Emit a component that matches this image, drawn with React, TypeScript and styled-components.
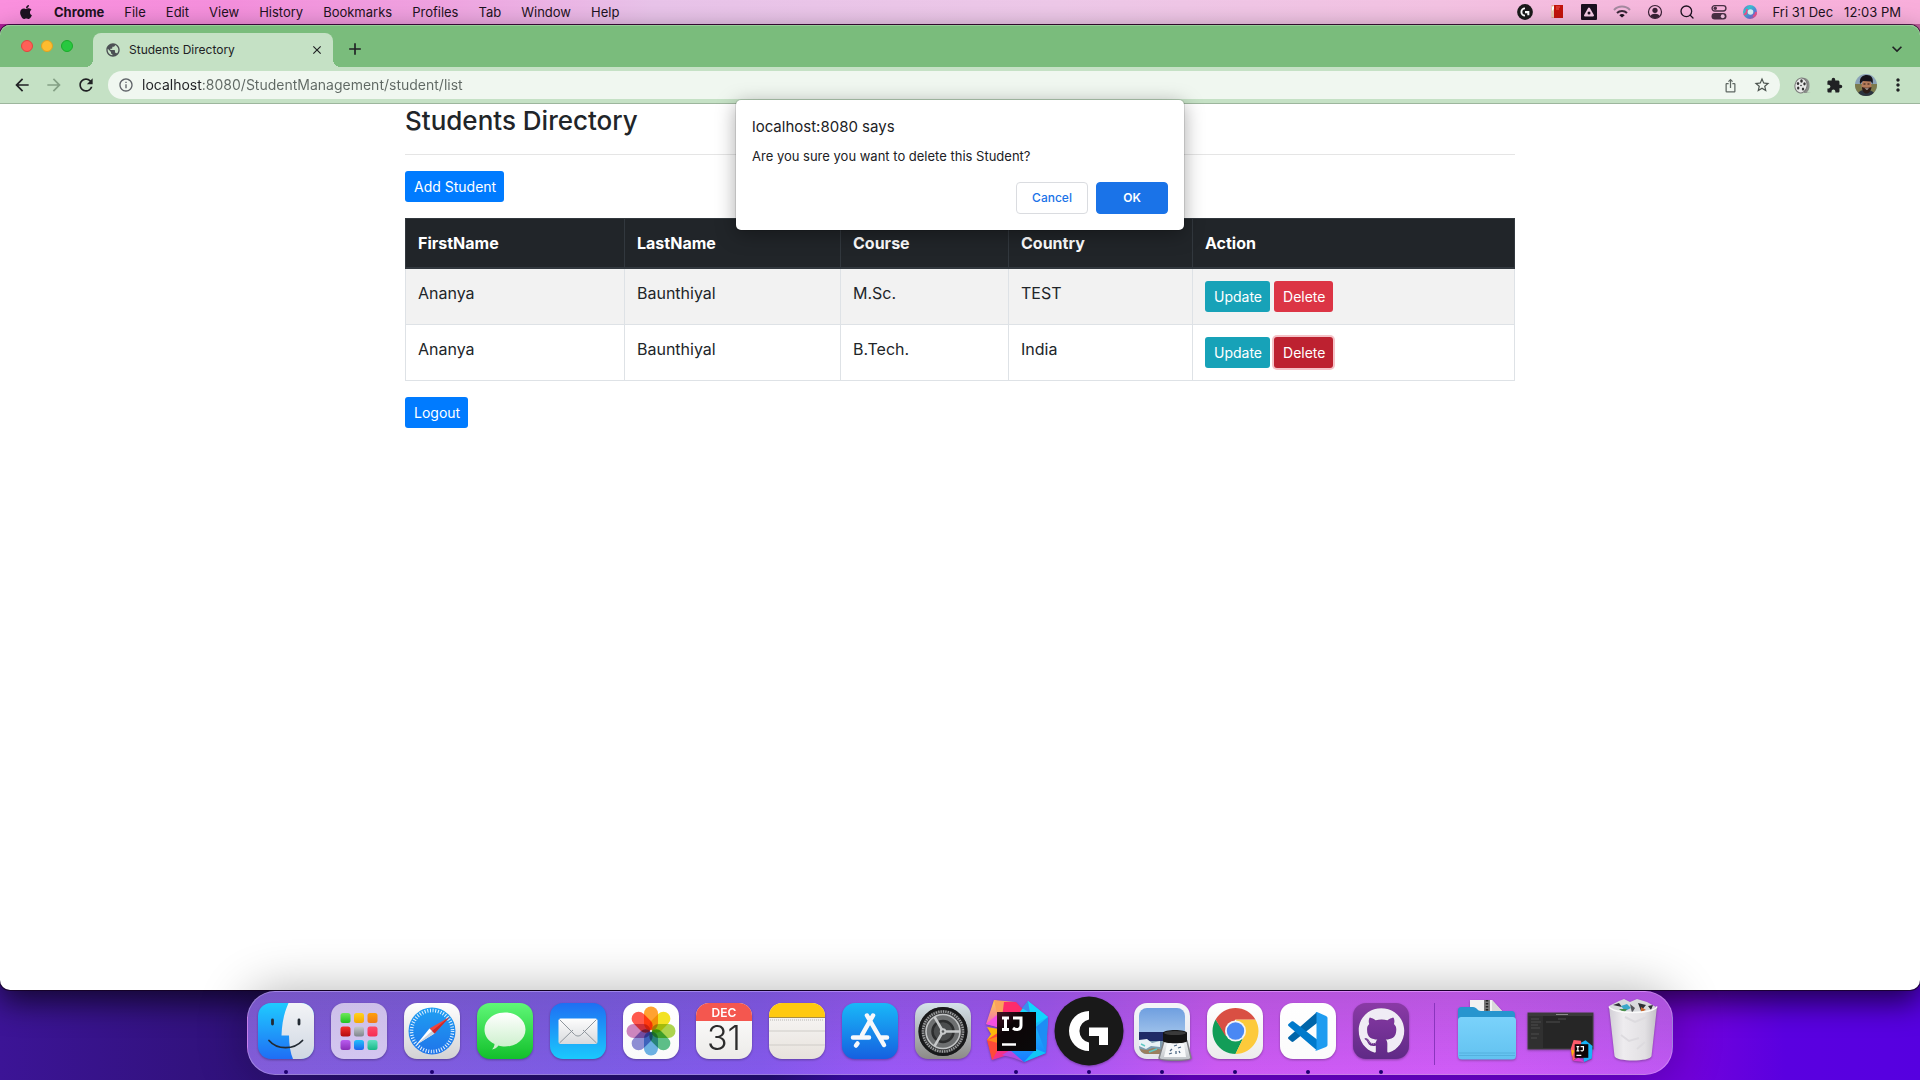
import React from "react";
import styled, { createGlobalStyle, css } from "styled-components";
import { FaApple, FaGithub } from "react-icons/fa";
import {
  MdAdd,
  MdArrowBack,
  MdArrowForward,
  MdClose,
  MdExtension,
  MdIosShare,
  MdKeyboardArrowDown,
  MdMoreVert,
  MdOutlineInfo,
  MdPublic,
  MdRefresh,
  MdStarOutline,
} from "react-icons/md";
import { Search } from "lucide-react";

const ui = `Inter, "Liberation Sans", Arial, sans-serif`;

const GlobalStyle = createGlobalStyle`
  *, *::before, *::after { box-sizing: border-box; }
  body {
    margin: 0;
    font-family: ${ui};
    color: #212529;
    -webkit-font-smoothing: antialiased;
  }
  button, input { font-family: inherit; }
  svg { display: block; flex: none; }
`;

/* ---------- desktop ---------- */

const Desktop = styled.div`
  display: flex;
  flex-direction: column;
  min-height: 100vh;
  overflow: hidden;
  background: linear-gradient(90deg, #b0209a 0%, #7a2a50 60%, #c0609c 100%) top / 100% 60px no-repeat,
    linear-gradient(
    90deg,
    #3c1496 0%,
    #32127f 10%,
    #27106f 22%,
    #25107a 40%,
    #3c0cb0 44%,
    #4208b8 59%,
    #6a02cc 62%,
    #7202dc 88%,
    #5a00e0 93%,
    #5600e0 100%
  );
`;

const MenuBar = styled.header`
  display: flex;
  align-items: center;
  justify-content: space-between;
  height: 24px;
  padding: 0 19px 1px 18px;
  font-size: 13px;
  color: #1d1220;
  background: linear-gradient(90deg, #fb90de 0%, #f48fdc 12%, #efa3e0 23%, #e8c3e9 34%, #edc8e8 55%, #f3c2e2 75%, #f7b6dc 88%, #f9aedb 100%);
`;

const MenuGroup = styled.nav`
  display: flex;
  align-items: center;
  gap: 20px;
`;

const MenuItem = styled.button<{ $strong?: boolean }>`
  padding: 0;
  border: 0;
  background: none;
  color: inherit;
  font-size: 13px;
  line-height: 16px;
  font-weight: ${(p) => (p.$strong ? 700 : 400)};
`;

const StatusGroup = styled.div`
  display: flex;
  align-items: center;
  gap: 16px;
`;

const Clock = styled.time`
  display: flex;
  gap: 11px;
  white-space: pre;
`;

const BrowserWindow = styled.main`
  position: relative;
  z-index: 0;
  flex: 1;
  display: flex;
  flex-direction: column;
  margin-top: 1px;
  border-radius: 10px;
  background: #fff;
  box-shadow: 0 0 0 1px rgba(20, 0, 30, 0.7), 0 12px 30px rgba(0, 0, 0, 0.65);
`;

/* ---------- tab strip and toolbar ---------- */

const TabStrip = styled.div`
  display: flex;
  align-items: flex-end;
  height: 42px;
  padding: 0 12px 0 21px;
  border-radius: 10px 10px 0 0;
  box-shadow: inset 0 1px 0 #97cd99;
  background: #7abc7c;
`;

const Lights = styled.div`
  display: flex;
  gap: 8px;
  height: 42px;
  padding-top: 15px;
  margin-right: 20px;
`;

const Light = styled.button<{ $fill: string; $edge: string }>`
  width: 12px;
  height: 12px;
  padding: 0;
  border: 1px solid ${(p) => p.$edge};
  border-radius: 50%;
  background: ${(p) => p.$fill};
`;

const Tab = styled.div`
  position: relative;
  display: flex;
  align-items: center;
  gap: 8px;
  width: 240px;
  height: 34px;
  padding: 0 8px 1px 12px;
  border-radius: 8px 8px 0 0;
  background: #c5e1c5;
  font-size: 12px;
  color: #202124;

  &::before,
  &::after {
    content: "";
    position: absolute;
    bottom: 0;
    width: 8px;
    height: 8px;
  }
  &::before {
    left: -8px;
    background: radial-gradient(circle at 0 0, transparent 8px, #c5e1c5 8px);
  }
  &::after {
    right: -8px;
    background: radial-gradient(circle at 100% 0, transparent 8px, #c5e1c5 8px);
  }
`;

const TabTitle = styled.span`
  flex: 1;
`;

const IconButton = styled.button<{ $size?: number; $dim?: boolean }>`
  display: flex;
  align-items: center;
  justify-content: center;
  width: ${(p) => p.$size ?? 32}px;
  height: ${(p) => p.$size ?? 32}px;
  padding: 0;
  border: 0;
  background: none;
  color: ${(p) => (p.$dim ? "#84a085" : "#202124")};
`;

const StripEnd = styled.div`
  display: flex;
  flex: 1;
  justify-content: space-between;
  padding: 0 0 1px 5px;
  margin-right: -6px;
`;

const Toolbar = styled.div`
  display: flex;
  align-items: center;
  height: 37px;
  padding: 0 6px;
  border-bottom: 1px solid #9db69d;
  background: #c5e1c5;
`;

const Omnibox = styled.div`
  display: flex;
  flex: 1;
  align-items: center;
  height: 28px;
  padding: 0 2px 0 10px;
  margin: 0 6px;
  border-radius: 14px;
  background: #f0f7f0;
  color: #5f6368;
`;

const Address = styled.input`
  flex: 1;
  height: 28px;
  margin-left: 8px;
  padding: 0 0 2px;
  border: 0;
  outline: 0;
  font-size: 14px;
  color: transparent;
  background: linear-gradient(90deg, #202124 60px, #5f6863 60px);
  background-clip: text;
  -webkit-background-clip: text;
`;

/* ---------- page ---------- */

const Container = styled.section`
  width: 100%;
  max-width: 1110px;
  margin: 0 auto;
`;

const Heading = styled.h2`
  margin: 0;
  padding-bottom: 16px;
  border-bottom: 1px solid #e5e5e5;
  font-size: 26px;
  line-height: 34px;
  font-weight: 500;
`;

type Tone = "primary" | "info" | "danger";
const tones: Record<Tone, string> = {
  primary: "#007bff",
  info: "#17a2b8",
  danger: "#dc3545",
};

const button = css<{ $tone: Tone; $active?: boolean }>`
  display: inline-block;
  padding: 5px 8px 5px 9px;
  border: 0;
  border-radius: 3px;
  font-size: 14px;
  line-height: 21px;
  color: #fff;
  text-decoration: none;
  background: ${(p) => tones[p.$tone]};
  ${(p) =>
    p.$active &&
    css`
      background: #bd2130;
      box-shadow: 0 0 0 2px rgba(225, 83, 97, 0.35);
    `}
`;

const LinkButton = styled.a<{ $tone: Tone; $active?: boolean }>`
  ${button}
`;

const PageButton = styled.button<{ $tone: Tone }>`
  ${button}
`;

const PageAction = styled.div`
  display: flex;
  padding: 16px 0;
`;

const RowActions = styled.div`
  display: flex;
  gap: 4px;
`;

const Table = styled.table`
  width: 100%;
  table-layout: fixed;
  border-collapse: collapse;
  font-size: 16px;
  line-height: 24px;

  th,
  td {
    padding: 12px;
    border: 1px solid #dee2e6;
    text-align: left;
    vertical-align: top;
  }
  thead th {
    border-color: #32383e;
    border-bottom: 2px solid #32383e;
    background: #212529;
    color: #fff;
    font-weight: 700;
  }
  tbody tr:nth-of-type(odd) {
    background: #f2f2f2;
  }
`;

const Col = styled.col<{ $width?: number }>`
  width: ${(p) => (p.$width ? `${p.$width}px` : "auto")};
`;

/* ---------- confirm dialog ---------- */

const Dialog = styled.div`
  position: absolute;
  top: 75px;
  left: 0;
  right: 0;
  width: 448px;
  margin: 0 auto;
  padding: 16px;
  border-radius: 5px;
  background: #fff;
  color: #202124;
  box-shadow: 0 0 0 1px rgba(0, 0, 0, 0.1), 0 4px 20px rgba(0, 0, 0, 0.35);
`;

const DialogTitle = styled.h1`
  margin: 0 0 9px;
  font-size: 15px;
  line-height: 22px;
  font-weight: 400;
`;

const DialogText = styled.p`
  margin: 0 0 17px;
  font-size: 13px;
  line-height: 18px;
`;

const DialogActions = styled.div`
  display: flex;
  justify-content: flex-end;
  gap: 8px;
`;

const DialogButton = styled.button<{ $main?: boolean }>`
  width: 72px;
  height: 32px;
  padding: 0 0 2px;
  border: 1px solid ${(p) => (p.$main ? "#1a73e8" : "#dadce0")};
  border-radius: 4px;
  background: ${(p) => (p.$main ? "#1a73e8" : "#fff")};
  color: ${(p) => (p.$main ? "#fff" : "#1a73e8")};
  font-size: 12px;
  font-weight: ${(p) => (p.$main ? 600 : 500)};
`;

/* ---------- dock ---------- */

const DockArea = styled.footer`
  position: relative;
  z-index: 1;
  display: flex;
  justify-content: center;
  height: 90px;
  padding: 1px 0 5px;
`;

const DockBar = styled.div`
  display: flex;
  padding: 0 2px;
  border: 1px solid rgba(255, 255, 255, 0.25);
  border-radius: 28px;
  background: linear-gradient(rgba(60, 50, 90, 0.16), rgba(60, 50, 90, 0)),
    linear-gradient(90deg, #835ddb 0%, #7d5ce6 25%, #8459ec 36%, #9a58f6 45%, #a356f4 56%, #cc5af4 68%, #d05cf8 85%, #c058f4 100%);
  box-shadow: 0 0 50px rgba(0, 0, 0, 0.3);
`;

const DockItem = styled.button`
  display: flex;
  flex-direction: column;
  align-items: center;
  width: 73px;
  padding: 11px 1px 0 0;
  border: 0;
  background: none;

  svg {
    overflow: visible;
    filter: drop-shadow(0 1px 1px rgba(0, 0, 0, 0.3));
  }
`;

const RunningDot = styled.span`
  width: 4px;
  height: 4px;
  margin-top: 11px;
  border-radius: 50%;
  background: #1d0070;
`;

const DockDivider = styled.span`
  width: 1px;
  height: 62px;
  margin: 11px 16px 0;
  background: #8a35bd;
`;

/* ---------- menu bar glyphs ---------- */

const LogiG = ({ size = 16 }: { size?: number }) => (
  <svg width={size} height={size} viewBox="0 0 70 70">
    <circle cx="35" cy="35" r="34.500" fill="#1a1a1a" />
    <path d="M35 15a20 20 0 0 0 0 40v-8.500a11.500 11.500 0 0 1 0-23zM35 31h19v18h-9v-9h-10z" fill="#fff" />
  </svg>
);

const DictionaryGlyph = () => (
  <svg width="16" height="16" viewBox="0 0 16 16">
    <path d="M2 2l3-1h9v13H5l-3-1z" fill="#c3140c" />
    <path d="M2 2l3-1v13l-3-1z" fill="#e9c9b0" />
    <path d="M3 3l2-1v3L3 7z" fill="#fff" />
    <path d="M7 3h4M7 5h3" stroke="#e55" />
  </svg>
);

const TriangleGlyph = () => (
  <svg width="16" height="16" viewBox="0 0 16 16">
    <rect width="16" height="16" rx="1" fill="#1a1020" />
    <path d="M8 4.500L12 11.500H4z" fill="#f6cbe6" stroke="#f6cbe6" strokeWidth="2" strokeLinejoin="round" />
    <circle cx="8" cy="9" r="1.500" fill="#1a1020" />
  </svg>
);

const WifiGlyph = () => (
  <svg width="18" height="16" viewBox="0 0 18 16" fill="none" strokeWidth="2">
    <path d="M1 6a11 11 0 0 1 16 0" stroke="#a58aa0" />
    <path d="M4 9a7 7 0 0 1 10 0" stroke="#3d2a3b" />
    <path d="M9 13.500L6.300 11.200a4 4 0 0 1 5.400 0z" fill="#1d1220" />
  </svg>
);

const UserGlyph = () => (
  <svg width="16" height="16" viewBox="0 0 16 16">
    <circle cx="8" cy="8" r="6.500" fill="none" stroke="#3a2036" strokeWidth="1.200" />
    <circle cx="8" cy="6.300" r="2.600" fill="#3a2036" />
    <path d="M3.500 12c1-3 8-3 9 0-2 3-7 3-9 0z" fill="#3a2036" />
  </svg>
);

const ControlGlyph = () => (
  <svg width="16" height="16" viewBox="0 0 15 15">
    <rect x="1" y="1.500" width="13" height="5" rx="2.500" fill="none" stroke="#4a3046" strokeWidth="1.300" />
    <circle cx="4" cy="4" r="1.600" fill="#4a3046" />
    <rect x="0.500" y="8.500" width="14" height="6" rx="3" fill="#4a3046" />
    <circle cx="11" cy="11.500" r="1.800" fill="#f3c2e2" />
  </svg>
);

const SiriGlyph = () => (
  <svg width="14" height="14" viewBox="0 0 14 14">
    <defs>
      <linearGradient id="siri" x1="0" y1="0" x2="1" y2="1">
        <stop offset="0" stopColor="#8a5bc8" />
        <stop offset="0.300" stopColor="#35c5cf" />
        <stop offset="0.650" stopColor="#5a7fd8" />
        <stop offset="1" stopColor="#e8468a" />
      </linearGradient>
    </defs>
    <circle cx="7" cy="7" r="7" fill="url(#siri)" />
    <path d="M1 9c2 1 3-2 3-5M10 11c2 0 3-2 3-4" stroke="#e8508e" strokeWidth="2" fill="none" />
    <circle cx="7.500" cy="7" r="2.800" fill="#d8f3f6" />
  </svg>
);

/* ---------- toolbar glyphs ---------- */

const ReelGlyph = () => (
  <svg width="17" height="17" viewBox="0 0 17 17">
    <path d="M8 1c5-1 8 3 7.500 8 0 3-1 5-3 6.500L17 16h-7z" fill="#8b8f8b" />
    <ellipse cx="7" cy="8.500" rx="6" ry="7.500" fill="#e6e8e6" stroke="#777" transform="rotate(12 7 8.500)" />
    <g fill="#333">
      <ellipse cx="7.500" cy="4" rx="1.300" ry="1.700" />
      <ellipse cx="4" cy="6.500" rx="1.200" ry="1.600" />
      <ellipse cx="10.500" cy="6.800" rx="1.200" ry="1.600" />
      <ellipse cx="4.200" cy="11" rx="1.200" ry="1.600" />
      <ellipse cx="9" cy="12" rx="1.200" ry="1.600" />
      <circle cx="7" cy="8.500" r="0.800" />
    </g>
  </svg>
);

const Avatar = () => (
  <svg width="22" height="22" viewBox="0 0 22 22">
    <defs>
      <clipPath id="face"><circle cx="11" cy="11" r="11" /></clipPath>
    </defs>
    <g clipPath="url(#face)">
      <rect width="22" height="22" fill="#8ba3b8" />
      <rect y="10" width="22" height="12" fill="#7c7a4c" />
      <path d="M2 22c1-5 4-6 9-6s9 2 9 6z" fill="#2b3440" />
      <ellipse cx="11.500" cy="11.500" rx="5" ry="6.500" fill="#b57b5a" />
      <path d="M5 10C4 3 8 1 12 1s7 3 5.500 9L16 7.500 8 7z" fill="#15131a" />
      <path d="M7 13c1 1 8 1 9.500 0-.5 4-2.500 6.500-5 6.500S7 17 7 13z" fill="#2c1c18" />
      <path d="M9.500 14.500h4.500l-2 1.300z" fill="#f0e4dc" />
      <path d="M8.500 10h2M12.500 10h2" stroke="#241712" />
    </g>
  </svg>
);

/* ---------- dock drawings ---------- */

const Grad = ({ id, from, to, mid }: { id: string; from: string; to: string; mid?: string }) => (
  <linearGradient id={id} x1="0" y1="0" x2="0" y2="1">
    <stop offset="0" stopColor={from} />
    {mid && <stop offset="0.500" stopColor={mid} />}
    <stop offset="1" stopColor={to} />
  </linearGradient>
);

const Tile = ({ id, from, to, children }: { id: string; from: string; to: string; children?: React.ReactNode }) => (
  <svg width="56" height="56" viewBox="0 0 56 56">
    <defs>
      <Grad id={id} from={from} to={to} />
      <clipPath id={`${id}-clip`}><rect width="56" height="56" rx="13" /></clipPath>
    </defs>
    <rect width="56" height="56" rx="13" fill={`url(#${id})`} />
    {children}
  </svg>
);

const Finder = () => (
  <Tile id="finder" from="#1fcbff" to="#1f6ef5">
    <defs><Grad id="finder-r" from="#f3f4f7" to="#cfd7e2" /></defs>
    <path d="M30.500 0C26 10 24 20 23.500 32.500h7.500C31 42 32.500 50 35 56h21V0z" fill="url(#finder-r)" clipPath="url(#finder-clip)" />
    <path d="M14.500 17v4M41 17v4" stroke="#222a33" strokeWidth="2.800" strokeLinecap="round" />
    <path d="M11 37.500c8 9.500 25 9.500 33.500 0" fill="none" stroke="#222a33" strokeWidth="1.800" strokeLinecap="round" />
  </Tile>
);

const padColors = [
  ["#6ee85c", "#1fc41f"], ["#ffd21f", "#f5a800"], ["#ff9f0a", "#ef7a1a"],
  ["#f5322a", "#b30d0d"], ["#c5c9ce", "#7f858c"], ["#ff4a6a", "#f52d55"],
  ["#b95cf0", "#8a2fb8"], ["#22c2fb", "#1f63ee"], ["#5fe0c2", "#18b887"],
];

const Launchpad = () => (
  <Tile id="pad" from="#cdbfe9" to="#d3c6f0">
    {padColors.map(([a, b], i) => (
      <g key={a}>
        <defs><Grad id={`pad${i}`} from={a} to={b} /></defs>
        <rect x={9.500 + (i % 3) * 13.500} y={10 + Math.floor(i / 3) * 13.500} width="10" height="10" rx="2.500" fill={`url(#pad${i})`} />
      </g>
    ))}
  </Tile>
);

const Safari = () => (
  <Tile id="safari" from="#ffffff" to="#d2d2d4">
    <defs><Grad id="safari-b" from="#1f9ff2" to="#1f74ea" /></defs>
    <circle cx="28" cy="28" r="23.500" fill="url(#safari-b)" />
    <circle cx="28" cy="28" r="20.500" fill="none" stroke="#e4f2ff" strokeWidth="3.600" strokeDasharray="1 1.683" />
    <path d="M45.500 14L25.500 25.500l5 5z" fill="#f0443c" />
    <path d="M12 42l13.500-16.500 5 5z" fill="#fff" />
    <path d="M12 42l18.500-11.500-2.500-2.500z" fill="#ccd3dc" />
    <path d="M45.500 14L30.500 30.500 28 28z" fill="#c92a2a" />
  </Tile>
);

const Messages = () => (
  <Tile id="msg" from="#5ff777" to="#12c02b">
    <defs><Grad id="msg-b" from="#ffffff" to="#c9efc9" /></defs>
    <path d="M28 9.500c11.500 0 20.500 7.500 20.500 17S39.500 43.500 28 43.500c-2.500 0-4.500-.3-6.500-1-1.500 2-4 3.700-6.500 4 1.500-1.500 2.500-3.500 2.500-5.500C11 38 7.500 32.500 7.500 26.500c0-9.500 9-17 20.500-17z" fill="url(#msg-b)" />
  </Tile>
);

const Mail = () => (
  <Tile id="mail" from="#1e6ff3" to="#1bc9fd">
    <defs><Grad id="mail-e" from="#fdfdfd" to="#d8dadd" /></defs>
    <rect x="8.500" y="15.500" width="39" height="25.500" rx="2" fill="url(#mail-e)" />
    <path d="M9.500 40L23 27M46.500 40L33 27M9.500 16.500L24.500 31.500c2 2 5 2 7 0L46.500 16.500" fill="none" stroke="#8e959c" strokeWidth="1" />
  </Tile>
);

const petals = ["#ff9a1f", "#f2df10", "#a5cf3f", "#4fb87e", "#5fa9e0", "#8484cf", "#c97cb8", "#ff4b3e"];

const Photos = () => (
  <Tile id="photos" from="#ffffff" to="#fafafa">
    <g style={{ isolation: "isolate" }}>
      {petals.map((c, i) => (
        <rect key={c} x="21" y="3.500" width="14" height="24" rx="7" fill={c} fillOpacity="0.920" transform={`rotate(${i * 45} 28 28)`} style={{ mixBlendMode: "multiply" }} />
      ))}
    </g>
    <circle cx="28" cy="28" r="1" fill="#fff" />
  </Tile>
);

const Calendar = () => (
  <Tile id="cal" from="#ffffff" to="#ecebe8">
    <path d="M0 18h56V0H0z" fill="#f4574f" clipPath="url(#cal-clip)" />
    <text x="28" y="13.500" textAnchor="middle" fontSize="12" fontWeight="600" fill="#fff">DEC</text>
    <text x="28" y="47" textAnchor="middle" fontSize="34" fontWeight="300" fill="#2c2c2c">31</text>
  </Tile>
);

const Notes = () => (
  <Tile id="notes" from="#fbfafa" to="#e7e2dc">
    <path d="M0 14h56V0H0z" fill="#ffc90f" clipPath="url(#notes-clip)" />
    <path d="M0 14.500h56" stroke="#a88d45" />
    <path d="M1 17h54" stroke="#b8b6b3" strokeDasharray="1 1" />
    <path d="M0 28h56M0 42h56" stroke="#cfccc8" />
  </Tile>
);

const AppStore = () => (
  <Tile id="store" from="#19b8f8" to="#1560e0">
    <g fill="none" stroke="#f6f8fb" strokeWidth="4.500" strokeLinecap="round">
      <path d="M31 12.500L20 32M25 12.500L42 42M11 34.500h16M38 34.500h7M15.500 40.500l-1.500 2" />
    </g>
  </Tile>
);

const Settings = () => (
  <Tile id="prefs" from="#d5e2ea" to="#8c8a87">
    <circle cx="28" cy="28.500" r="24.500" fill="#3c3d3e" />
    <circle cx="28" cy="28.500" r="23" fill="none" stroke="#18191a" strokeWidth="3" />
    <circle cx="28" cy="28.500" r="20" fill="none" stroke="#a0a2a3" strokeWidth="2.500" strokeDasharray="1.200 1.200" />
    <circle cx="28" cy="28.500" r="17" fill="#6d6f70" stroke="#c2c4c5" strokeWidth="1.600" />
    <circle cx="28" cy="28.500" r="10.500" fill="#4b4d4e" stroke="#2c2d2e" strokeWidth="2.500" />
    <g stroke="#c8cacb" strokeWidth="2.600">
      <path d="M28 28.500h17M28 28.500L19.500 13.800M28 28.500L19.500 43.200" />
    </g>
    <circle cx="28" cy="28.500" r="3.200" fill="#c8cacb" />
    <circle cx="28" cy="28.500" r="1.300" fill="#55585a" />
  </Tile>
);

const IntelliJ = () => (
  <svg width="56" height="56" viewBox="0 0 56 56">
    <defs>
      <linearGradient id="ij-a" x1="0" y1="0" x2="0" y2="1">
        <stop offset="0" stopColor="#fdd04a" />
        <stop offset="1" stopColor="#f55ac8" />
      </linearGradient>
      <linearGradient id="ij-b" x1="0" y1="0" x2="0" y2="1">
        <stop offset="0" stopColor="#18e3f5" />
        <stop offset="1" stopColor="#1a7bff" />
      </linearGradient>
      <linearGradient id="ij-k" x1="0" y1="0" x2="1" y2="1">
        <stop offset="0" stopColor="#4a1228" />
        <stop offset="0.350" stopColor="#0c0406" />
        <stop offset="1" stopColor="#0a0a0a" />
      </linearGradient>
    </defs>
    <path d="M-2 21L6-3l14 4-8 24z" fill="url(#ij-a)" />
    <path d="M6-3l21 2-6 12-11 4z" fill="#fba35c" />
    <path d="M16-1l12 0 9 10-4 10-20 4z" fill="#ff2c6c" />
    <path d="M-2 21l12-10 4 14z" fill="#f74fe0" />
    <path d="M-1 24l12 2 2 8-14 3 4-6z" fill="#ffb60a" />
    <path d="M-1 37l12-8 6 16-13 12z" fill="#ff4a38" />
    <path d="M-1 37l12-4 2 8z" fill="#ff8a1a" />
    <path d="M4 57l8-14 14 7z" fill="#f2318c" />
    <path d="M14 52l10-6 12 13-10-4z" fill="#b44ae0" />
    <path d="M32 9L40-2l20 16-2 36-22 9-14-12z" fill="url(#ij-b)" />
    <path d="M40-2l20 16-12 6z" fill="#10d6ff" />
    <path d="M34 5l6-7 2 12z" fill="#3a8df0" />
    <path d="M48 24l12-10-2 36z" fill="#1d8df5" />
    <path d="M36 59l12-13 10 4z" fill="#12c5f5" />
    <rect x="9" y="9" width="39" height="39" fill="url(#ij-k)" />
    <path d="M14 15h7M14 26.500h7M17.500 15v11M25 15h8v7.500c0 4.500-5 5-8 2.500" fill="none" stroke="#fff" strokeWidth="3" />
    <path d="M14 41.500h14" stroke="#fff" strokeWidth="2.500" />
  </svg>
);

const LogitechHub = () => (
  <svg width="56" height="56" viewBox="0 0 56 56">
    <circle cx="28" cy="28" r="34.500" fill="#191919" />
    <path d="M28 8a20 20 0 0 0 0 40v-8.500a11.700 11.700 0 0 1 0-23zM28 24.500h19V42h-9v-9H28z" fill="#fff" />
  </svg>
);

const Preview = () => (
  <Tile id="prev" from="#f5f6f9" to="#e3e4ea">
    <defs>
      <Grad id="prev-s" from="#6f9fe0" to="#c3dcf2" />
      <Grad id="prev-j" from="#f2f4f6" to="#bfc4c8" />
      <clipPath id="prev-c"><rect x="5" y="5" width="46" height="46" rx="8" /></clipPath>
    </defs>
    <g clipPath="url(#prev-c)">
      <rect x="5" y="5" width="46" height="46" fill="url(#prev-s)" />
      <rect x="5" y="29" width="46" height="10" fill="#1f2a66" />
      <rect x="5" y="38" width="46" height="13" fill="#7d9cb0" />
      <path d="M5 37l8-1 5 4 8-2v6l-9-1-5 3-7-3z" fill="#e9f1f5" />
      <path d="M5 46l8 1 6-2 10 2v4H5z" fill="#9a7f5e" />
      <path d="M7 41l4 2M15 49l8-3" stroke="#5fc8c4" strokeWidth="1.500" />
    </g>
    <path d="M30 38h23l4 17c0 3-32 3-32 0z" fill="url(#prev-j)" stroke="#7e8184" strokeWidth="1.500" />
    <path d="M33 41h17l2 13H30z" fill="#f7f9fa" />
    <path d="M40 43l3-1M44 45l3-1M36 48l2-2M35 51l3-1M42 48v3M45 48l1 2" stroke="#4d6682" strokeWidth="1.300" />
    <path d="M29 30c0-4 24-4 24 0v8c0 3-24 3-24 0z" fill="#141414" />
    <ellipse cx="41" cy="30" rx="11" ry="2" fill="#3a3a3a" />
  </Tile>
);

const Chrome = () => (
  <Tile id="chrome" from="#ffffff" to="#ececec">
    <path d="M8.600 16.500A23 23 0 0 0 28.500 51L37.200 33 19.800 33z" fill="#129d58" />
    <path d="M28.500 51A23 23 0 0 0 48.400 16.500H28.500l8.700 16.500z" fill="#fdca3b" />
    <path d="M8.600 16.500A23 23 0 0 1 48.400 16.500H28.500L18.500 33z" fill="#d94f43" />
    <circle cx="28.500" cy="28" r="10.500" fill="#f4f4f4" />
    <circle cx="28.500" cy="28" r="8.700" fill="#4a88f4" />
  </Tile>
);

const VSCode = () => (
  <Tile id="code" from="#ffffff" to="#fbfbfb">
    <path d="M37 9v11L13.500 38.500c-.7.500-1.500.5-2 0L8.500 36c-.6-.6-.6-1.400 0-2z" fill="#0065a9" />
    <path d="M37 47.500v-11L13.500 18.500c-.7-.5-1.500-.5-2 0L8.500 21c-.6.600-.6 1.400 0 2z" fill="#007acc" />
    <path d="M37 9l9 4c1 .500 1.500 1.200 1.500 2.200v26.600c0 1-.5 1.700-1.500 2.200l-9 3.500c-1 .300-2 0-2.500-.5 1 .5 2 0 2-1.500V11c0-1.500-1-2-2-1.500.5-.5 1.500-.8 2.500-.5z" fill="#1f9cf0" />
  </Tile>
);

const GitHubApp = () => (
  <Tile id="gh" from="#8a3aa6" to="#5f2a86">
    <FaGithub x="5" y="4.500" width="46" height="47" size={47} color="#f0ecf5" />
  </Tile>
);

const Folder = () => (
  <svg width="56" height="56" viewBox="0 0 56 56">
    <defs><Grad id="fold" from="#7ad2fb" to="#62c2f0" /></defs>
    <path d="M11-3h22l10 11H11z" fill="#f1f1f1" />
    <path d="M33-3l10 11H33z" fill="#d9d9d9" />
    <path d="M25-3h6V8h-6z" fill="#777" />
    <path d="M28-3V8" stroke="#222" strokeWidth="2.500" strokeDasharray="1.500 1.500" />
    <path d="M-1 8c0-3 1-4 4-4h11c4 0 4 4 8 4h30c3 0 4 1 4 4v20H-1z" fill="#2795cf" />
    <path d="M-1 18c0-3 1-4 4-4h50c3 0 4 1 4 4v34c0 3-1 4.500-4 4.500H3c-3 0-4-1.500-4-4.500z" fill="url(#fold)" />
    <path d="M0 50h56M0 52.500h56" stroke="#54b0de" strokeWidth="1" />
  </svg>
);

const MinimisedWindow = () => (
  <svg width="65" height="56" viewBox="0 0 65 56">
    <rect y="10" width="65" height="36" fill="#262626" stroke="#444" />
    <rect y="10" width="65" height="3" fill="#3a3a3a" />
    <rect x="1" y="13" width="14" height="32" fill="#303030" />
    <path d="M3 16h8M3 19h10M3 22h7M3 25h9M3 31h8M3 35h6M18 19h14M30 16h8" stroke="#4d4d4d" />
    <path d="M28 11.500h12" stroke="#8a8a8a" />
    <svg x="42" y="37" width="23" height="22" viewBox="-3 -3 63 63">
      <path d="M-2 21L6-3l21 2 5 30-28 28z" fill="#ff5a6a" />
      <path d="M-1 24l10 4-8 16z" fill="#ffb60a" />
      <path d="M27 5L40-2l20 16-2 36-22 10z" fill="#18b4f8" />
      <path d="M4 57l16-10 16 13z" fill="#e03ad0" />
      <rect x="9" y="9" width="39" height="39" fill="#0c0406" />
      <path d="M14 16h8M14 28h8M18 16v12M26 16h8v9c0 3-5 4-8 2M14 41h14" fill="none" stroke="#fff" strokeWidth="3.500" />
    </svg>
  </svg>
);

const Trash = () => (
  <svg width="56" height="56" viewBox="0 0 56 56">
    <defs>
      <linearGradient id="bin" x1="0" y1="0" x2="1" y2="0">
        <stop offset="0" stopColor="#d2cfd6" />
        <stop offset="0.300" stopColor="#eeecef" />
        <stop offset="0.750" stopColor="#e2e0e3" />
        <stop offset="1" stopColor="#c3c0c6" />
      </linearGradient>
    </defs>
    <path d="M4 3L14-2l5-2 6 3 7-3 10 3 9 5-6 6H9z" fill="#d9dadd" />
    <path d="M8 2l6-2 3 4zM33 0l8 2-5 6zM43 3l5-1-2 5z" fill="#2f3036" />
    <path d="M16 3l6-2 4 4-6 3z" fill="#3aa7c9" />
    <path d="M14 6l8 0-3 4z" fill="#4d8f4a" />
    <path d="M36 4l5 3-5 2z" fill="#c7652e" />
    <path d="M25 1l5 4-3 5z" fill="#55565c" />
    <path d="M4 3.500c3 8 45 8 48 0L46.500 53c-1 6-36 6-37 0z" fill="url(#bin)" />
    <path d="M4 3.500c3 8 45 8 48 0" fill="none" stroke="#fafafa" strokeWidth="1.500" />
    <path d="M20 14l10 5 12-5M16 32l8 6 10-3M32 46l8-7" fill="none" stroke="#dddbdf" strokeWidth="2" />
  </svg>
);

/* ---------- data ---------- */

const menus = ["File", "Edit", "View", "History", "Bookmarks", "Profiles", "Tab", "Window", "Help"];

const students = [
  { first: "Ananya", last: "Baunthiyal", course: "M.Sc.", country: "TEST", active: false },
  { first: "Ananya", last: "Baunthiyal", course: "B.Tech.", country: "India", active: true },
];

const apps: { name: string; icon: React.ReactNode; running?: boolean }[] = [
  { name: "Finder", icon: <Finder />, running: true },
  { name: "Launchpad", icon: <Launchpad /> },
  { name: "Safari", icon: <Safari />, running: true },
  { name: "Messages", icon: <Messages /> },
  { name: "Mail", icon: <Mail /> },
  { name: "Photos", icon: <Photos /> },
  { name: "Calendar", icon: <Calendar /> },
  { name: "Notes", icon: <Notes /> },
  { name: "App Store", icon: <AppStore /> },
  { name: "System Preferences", icon: <Settings /> },
  { name: "IntelliJ IDEA", icon: <IntelliJ />, running: true },
  { name: "Logitech G HUB", icon: <LogitechHub />, running: true },
  { name: "Preview", icon: <Preview />, running: true },
  { name: "Google Chrome", icon: <Chrome />, running: true },
  { name: "Visual Studio Code", icon: <VSCode />, running: true },
  { name: "GitHub Desktop", icon: <GitHubApp />, running: true },
];

export default function App() {
  return (
    <Desktop>
      <GlobalStyle />
      <MenuBar>
        <MenuGroup aria-label="Menu bar">
          <FaApple size={16} />
          <MenuItem $strong>Chrome</MenuItem>
          {menus.map((m) => (
            <MenuItem key={m}>{m}</MenuItem>
          ))}
        </MenuGroup>
        <StatusGroup>
          <LogiG />
          <DictionaryGlyph />
          <TriangleGlyph />
          <WifiGlyph />
          <UserGlyph />
          <Search size={16} />
          <ControlGlyph />
          <SiriGlyph />
          <Clock>
            <span>Fri 31 Dec</span>
            <span>12:03 PM</span>
          </Clock>
        </StatusGroup>
      </MenuBar>

      <BrowserWindow>
        <TabStrip>
          <Lights>
            <Light $fill="#ff5f57" $edge="#e0443e" aria-label="Close window" />
            <Light $fill="#febc2e" $edge="#dea123" aria-label="Minimise window" />
            <Light $fill="#28c840" $edge="#1aab29" aria-label="Zoom window" />
          </Lights>
          <Tab>
            <MdPublic size={16} color="#4c5054" />
            <TabTitle>Students Directory</TabTitle>
            <IconButton $size={16} aria-label="Close tab"><MdClose size={14} /></IconButton>
          </Tab>
          <StripEnd>
            <IconButton $size={34} aria-label="New tab"><MdAdd size={20} /></IconButton>
            <IconButton $size={34} aria-label="Search tabs"><MdKeyboardArrowDown size={20} /></IconButton>
          </StripEnd>
        </TabStrip>
        <Toolbar>
          <IconButton aria-label="Back"><MdArrowBack size={20} /></IconButton>
          <IconButton $dim aria-label="Forward"><MdArrowForward size={20} /></IconButton>
          <IconButton aria-label="Reload"><MdRefresh size={20} /></IconButton>
          <Omnibox>
            <MdOutlineInfo size={16} />
            <Address aria-label="Address" defaultValue="localhost:8080/StudentManagement/student/list" spellCheck={false} />
            <IconButton aria-label="Share"><MdIosShare size={15} color="#5f6863" /></IconButton>
            <IconButton aria-label="Bookmark"><MdStarOutline size={18} color="#4b534e" /></IconButton>
          </Omnibox>
          <IconButton aria-label="Media extension"><ReelGlyph /></IconButton>
          <IconButton aria-label="Extensions"><MdExtension size={17} /></IconButton>
          <IconButton aria-label="Profile"><Avatar /></IconButton>
          <IconButton aria-label="More"><MdMoreVert size={20} /></IconButton>
        </Toolbar>

        <Container>
          <Heading>Students Directory</Heading>
          <PageAction>
            <PageButton $tone="primary">Add Student</PageButton>
          </PageAction>
          <Table>
            <colgroup>
              <Col $width={219} />
              <Col $width={216} />
              <Col $width={168} />
              <Col $width={184} />
              <Col />
            </colgroup>
            <thead>
              <tr>
                <th>FirstName</th>
                <th>LastName</th>
                <th>Course</th>
                <th>Country</th>
                <th>Action</th>
              </tr>
            </thead>
            <tbody>
              {students.map((s) => (
                <tr key={s.course}>
                  <td>{s.first}</td>
                  <td>{s.last}</td>
                  <td>{s.course}</td>
                  <td>{s.country}</td>
                  <td>
                    <RowActions>
                      <LinkButton href="#update" $tone="info">Update</LinkButton>
                      <LinkButton href="#delete" $tone="danger" $active={s.active}>Delete</LinkButton>
                    </RowActions>
                  </td>
                </tr>
              ))}
            </tbody>
          </Table>
          <PageAction>
            <PageButton $tone="primary">Logout</PageButton>
          </PageAction>
        </Container>

        <Dialog role="alertdialog" aria-labelledby="says" aria-describedby="message">
          <DialogTitle id="says">localhost:8080 says</DialogTitle>
          <DialogText id="message">Are you sure you want to delete this Student?</DialogText>
          <DialogActions>
            <DialogButton>Cancel</DialogButton>
            <DialogButton $main>OK</DialogButton>
          </DialogActions>
        </Dialog>
      </BrowserWindow>

      <DockArea>
        <DockBar>
          {apps.map((a) => (
            <DockItem key={a.name} aria-label={a.name}>
              {a.icon}
              {a.running && <RunningDot />}
            </DockItem>
          ))}
          <DockDivider />
          <DockItem aria-label="Downloads"><Folder /></DockItem>
          <DockItem aria-label="Minimised IntelliJ window"><MinimisedWindow /></DockItem>
          <DockItem aria-label="Bin"><Trash /></DockItem>
        </DockBar>
      </DockArea>
    </Desktop>
  );
}
